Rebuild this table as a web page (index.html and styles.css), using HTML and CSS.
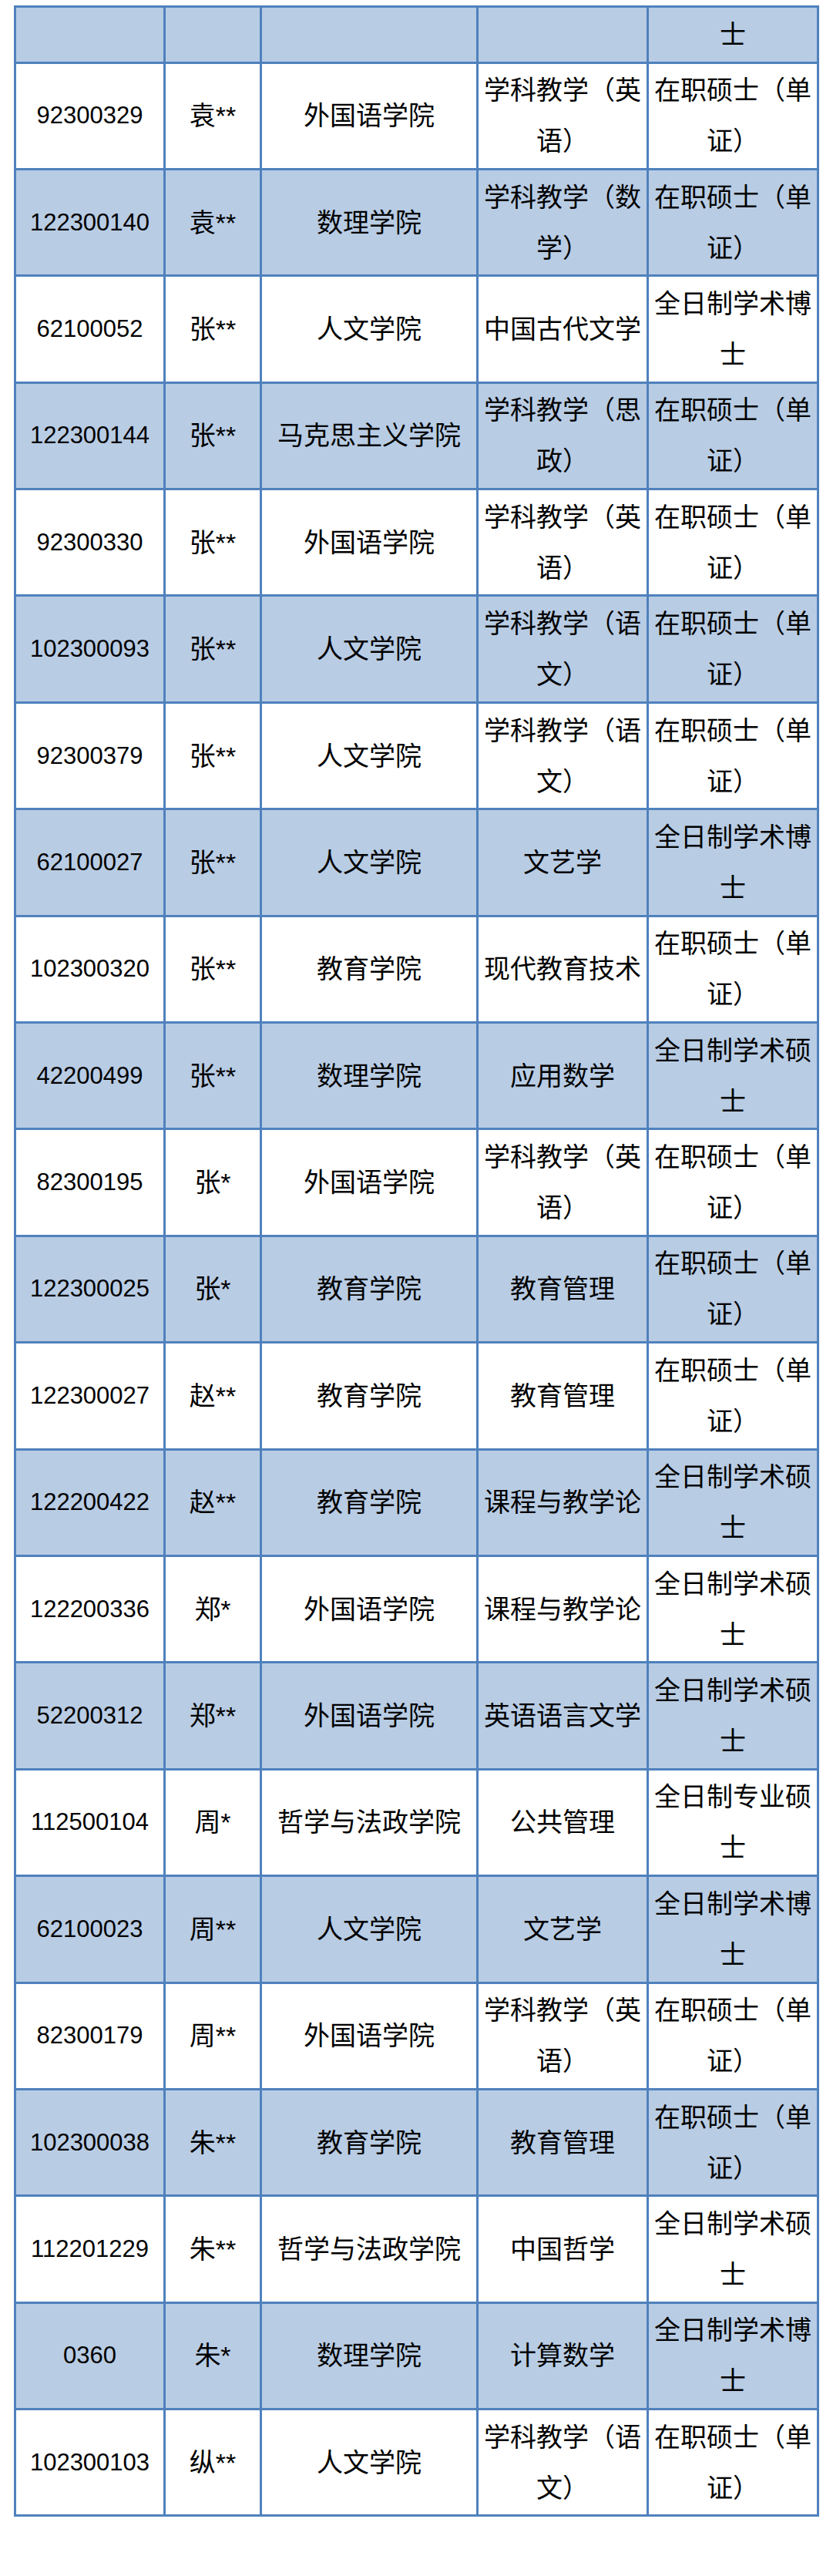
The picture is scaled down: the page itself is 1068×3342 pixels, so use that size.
FILE: index.html
```html
<!DOCTYPE html>
<html lang="zh-CN">
<head>
<meta charset="utf-8">
<title>名单</title>
<link rel="stylesheet" href="styles.css">
</head>
<body>
<table class="list">
  <colgroup>
    <col class="c-id"><col class="c-name"><col class="c-dept"><col class="c-major"><col class="c-type">
  </colgroup>
  <tbody>
    <tr class="head blue"><td class="num"></td><td></td><td></td><td></td><td>士</td></tr>
    <tr><td class="num">92300329</td><td>袁**</td><td>外国语学院</td><td>学科教学（英语）</td><td>在职硕士（单证）</td></tr>
    <tr class="blue"><td class="num">122300140</td><td>袁**</td><td>数理学院</td><td>学科教学（数学）</td><td>在职硕士（单证）</td></tr>
    <tr><td class="num">62100052</td><td>张**</td><td>人文学院</td><td>中国古代文学</td><td>全日制学术博士</td></tr>
    <tr class="blue"><td class="num">122300144</td><td>张**</td><td>马克思主义学院</td><td>学科教学（思政）</td><td>在职硕士（单证）</td></tr>
    <tr><td class="num">92300330</td><td>张**</td><td>外国语学院</td><td>学科教学（英语）</td><td>在职硕士（单证）</td></tr>
    <tr class="blue"><td class="num">102300093</td><td>张**</td><td>人文学院</td><td>学科教学（语文）</td><td>在职硕士（单证）</td></tr>
    <tr><td class="num">92300379</td><td>张**</td><td>人文学院</td><td>学科教学（语文）</td><td>在职硕士（单证）</td></tr>
    <tr class="blue"><td class="num">62100027</td><td>张**</td><td>人文学院</td><td>文艺学</td><td>全日制学术博士</td></tr>
    <tr><td class="num">102300320</td><td>张**</td><td>教育学院</td><td>现代教育技术</td><td>在职硕士（单证）</td></tr>
    <tr class="blue"><td class="num">42200499</td><td>张**</td><td>数理学院</td><td>应用数学</td><td>全日制学术硕士</td></tr>
    <tr><td class="num">82300195</td><td>张*</td><td>外国语学院</td><td>学科教学（英语）</td><td>在职硕士（单证）</td></tr>
    <tr class="blue"><td class="num">122300025</td><td>张*</td><td>教育学院</td><td>教育管理</td><td>在职硕士（单证）</td></tr>
    <tr><td class="num">122300027</td><td>赵**</td><td>教育学院</td><td>教育管理</td><td>在职硕士（单证）</td></tr>
    <tr class="blue"><td class="num">122200422</td><td>赵**</td><td>教育学院</td><td>课程与教学论</td><td>全日制学术硕士</td></tr>
    <tr><td class="num">122200336</td><td>郑*</td><td>外国语学院</td><td>课程与教学论</td><td>全日制学术硕士</td></tr>
    <tr class="blue"><td class="num">52200312</td><td>郑**</td><td>外国语学院</td><td>英语语言文学</td><td>全日制学术硕士</td></tr>
    <tr><td class="num">112500104</td><td>周*</td><td>哲学与法政学院</td><td>公共管理</td><td>全日制专业硕士</td></tr>
    <tr class="blue"><td class="num">62100023</td><td>周**</td><td>人文学院</td><td>文艺学</td><td>全日制学术博士</td></tr>
    <tr><td class="num">82300179</td><td>周**</td><td>外国语学院</td><td>学科教学（英语）</td><td>在职硕士（单证）</td></tr>
    <tr class="blue"><td class="num">102300038</td><td>朱**</td><td>教育学院</td><td>教育管理</td><td>在职硕士（单证）</td></tr>
    <tr><td class="num">112201229</td><td>朱**</td><td>哲学与法政学院</td><td>中国哲学</td><td>全日制学术硕士</td></tr>
    <tr class="blue"><td class="num">0360</td><td>朱*</td><td>数理学院</td><td>计算数学</td><td>全日制学术博士</td></tr>
    <tr><td class="num">102300103</td><td>纵**</td><td>人文学院</td><td>学科教学（语文）</td><td>在职硕士（单证）</td></tr>
  </tbody>
</table>
</body>
</html>
```

FILE: styles.css
```css
html, body {
  margin: 0;
  padding: 0;
  background: #ffffff;
}

body {
  font-family: "Liberation Sans", "Noto Sans CJK SC", sans-serif;
  color: #000000;
}

.list {
  margin: 7px 0 0 18px;
  border-collapse: separate;
  border-spacing: 0;
  table-layout: fixed;
  width: 1045px;
  border-top: 3px solid #4f81bd;
  border-left: 3px solid #4f81bd;
}

.c-id { width: 194px; }
.c-name { width: 125px; }
.c-dept { width: 281px; }
.c-major { width: 221px; }
.c-type { width: 221px; }

.list tr {
  height: 138.4px;
}

.list tr.head {
  height: 72.5px;
}

.list td {
  box-sizing: border-box;
  padding: 0;
  border-right: 3px solid #4f81bd;
  border-bottom: 3px solid #4f81bd;
  text-align: center;
  vertical-align: middle;
  font-size: 34px;
  line-height: 66px;
  background: #ffffff;
}

.list tr.blue td {
  background: #b8cce4;
}

.list td.num {
  font-size: 31px;
}
```
